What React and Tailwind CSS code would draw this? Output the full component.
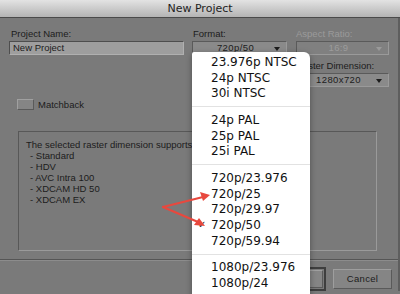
import React from "react";

const ui = { fontFamily: '"Liberation Sans", Arial, sans-serif' };
const title = { fontFamily: '"DejaVu Sans", "Liberation Sans", sans-serif' };
const menuFont = { fontFamily: '"DejaVu Sans", "Open Sans", sans-serif' };

function Label({ children, disabled, className = "" }) {
  return (
    <div
      className={`text-[9.5px] leading-[10px] h-[10px] whitespace-nowrap ${disabled ? "text-[#9a9a9a]" : "text-[#1c1c1c]"} ${className}`}
      style={ui}
    >
      {children}
    </div>
  );
}

function Select({ value, disabled, w }) {
  return (
    <div
      className={`relative h-[14px] border border-t-[#5a5a5a] border-l-[#5a5a5a] border-r-[#9a9a9a] border-b-[#9a9a9a] flex items-center justify-center ${disabled ? "bg-[#808080] text-[#9c9c9c]" : "bg-[#8a8a8a] text-[#1c1c1c]"}`}
      style={{ ...ui, width: w }}
    >
      <span className="text-[9.5px] leading-[10px] pr-[8px] tracking-[0.4px]">{value}</span>
      <span
        className={`absolute right-[6px] top-[5px] w-0 h-0 border-l-[3px] border-r-[3px] border-t-[4px] border-l-transparent border-r-transparent ${disabled ? "border-t-[#9a9a9a]" : "border-t-[#1c1c1c]"}`}
      />
    </div>
  );
}

function MenuItem({ children, checked }) {
  return (
    <div className="relative h-[15.7px] flex items-center pl-[19px] text-[12px] leading-[14px] text-[#111]" style={menuFont}>
      {checked && <span className="absolute left-[6px] top-[1px] text-[10px] text-[#222]">✓</span>}
      {children}
    </div>
  );
}

function Sep() {
  return (
    <div className="h-[11px] flex items-center">
      <div className="h-px w-full bg-[#e2e2e2]" />
    </div>
  );
}

export default function App() {
  return (
    <div className="relative w-[400px] h-[294px] overflow-hidden bg-[#7a7a7a]">
      {/* title bar */}
      <div className="h-[18px] bg-gradient-to-b from-[#e3e3e3] to-[#b4b4b4] border-b border-[#4a4a4a] flex items-center justify-center">
        <span className="text-[11px] leading-[14px] text-[#1e1e1e]" style={title}>New Project</span>
      </div>

      <div className="flex">
        <div className="flex-1">
          {/* fields */}
          <div className="flex pl-[9px] pt-[11px]">
            <div className="w-[175px]">
              <Label className="pl-[2px]">Project Name:</Label>
              <div className="mt-[2px] h-[14px] bg-[#9e9e9e] border border-t-[#4e4e4e] border-l-[#4e4e4e] border-r-[#b0b0b0] border-b-[#b0b0b0] flex items-center pl-[3px]">
                <span className="text-[9.5px] leading-[10px] text-[#1c1c1c]" style={ui}>New Project</span>
              </div>
            </div>
            <div className="ml-[8px] w-[95px]">
              <Label className="pl-[1px]">Format:</Label>
              <div className="mt-[2px]"><Select value="720p/50" w={95} /></div>
            </div>
            <div className="ml-[9px] w-[93px]">
              <Label disabled>Aspect Ratio:</Label>
              <div className="mt-[2px]"><Select value="16:9" disabled w={93} /></div>
              <Label className="mt-[6px]">Raster Dimension:</Label>
              <div className="mt-[2px]"><Select value="1280x720" w={93} /></div>
            </div>
          </div>

          {/* matchback */}
          <div className="flex items-center pl-[17px] mt-[12px] gap-[4px]">
            <div className="w-[17px] h-[11px] bg-[#858585] border border-t-[#a0a0a0] border-l-[#a0a0a0] border-r-[#5a5a5a] border-b-[#5a5a5a]" />
            <Label>Matchback</Label>
          </div>

          {/* info panel */}
          <div className="ml-[18px] mt-[21px] w-[359px] h-[120px] border border-t-[#585858] border-l-[#585858] border-r-[#9a9a9a] border-b-[#9a9a9a] pt-[7px] pl-[7px]" style={ui}>
            <div className="text-[9.5px] leading-[11px] text-[#1c1c1c]">
              <div>The selected raster dimension supports the following formats:</div>
              <div className="pl-[4px]">- Standard</div>
              <div className="pl-[4px]">- HDV</div>
              <div className="pl-[4px]">- AVC Intra 100</div>
              <div className="pl-[4px]">- XDCAM HD 50</div>
              <div className="pl-[4px]">- XDCAM EX</div>
            </div>
          </div>

          {/* separator */}
          <div className="mt-[8px] h-px bg-[#555]" />
          <div className="h-px bg-[#8c8c8c]" />

          {/* buttons */}
          <div className="flex justify-end gap-[7px] pr-[6px] pt-[6px]">
            <div className="w-[66px] h-[24px] border-2 border-[#3e3e3e] p-[1px]">
              <div className="h-full bg-[#858585] border border-t-[#a0a0a0] border-l-[#a0a0a0] border-r-[#5a5a5a] border-b-[#5a5a5a] flex items-center justify-center">
                <span className="text-[9.5px] text-[#1c1c1c]" style={ui}>OK</span>
              </div>
            </div>
            <div className="mt-[2px] w-[59px] h-[20px] bg-[#858585] border border-t-[#9e9e9e] border-l-[#9e9e9e] border-r-[#5a5a5a] border-b-[#5a5a5a] flex items-center justify-center">
              <span className="text-[9.5px] text-[#1c1c1c] tracking-[0.3px]" style={ui}>Cancel</span>
            </div>
          </div>
        </div>
        <div className="w-[2px] bg-[#5e5e5e]" />
      </div>

      {/* dropdown menu overlay */}
      <div className="absolute left-[192px] top-[52px] w-[118px] h-[250px] bg-white rounded-tr-[6px] rounded-tl-[2px] shadow-[0_2px_6px_rgba(0,0,0,0.35)] pt-[2px]">
        <MenuItem>23.976p NTSC</MenuItem>
        <MenuItem>24p NTSC</MenuItem>
        <MenuItem>30i NTSC</MenuItem>
        <Sep />
        <MenuItem>24p PAL</MenuItem>
        <MenuItem>25p PAL</MenuItem>
        <MenuItem>25i PAL</MenuItem>
        <Sep />
        <MenuItem>720p/23.976</MenuItem>
        <MenuItem>720p/25</MenuItem>
        <MenuItem>720p/29.97</MenuItem>
        <MenuItem checked>720p/50</MenuItem>
        <MenuItem>720p/59.94</MenuItem>
        <Sep />
        <MenuItem>1080p/23.976</MenuItem>
        <MenuItem>1080p/24</MenuItem>
      </div>

      {/* red arrows */}
      <svg className="absolute left-0 top-0 pointer-events-none" width="400" height="294">
        <g stroke="#e8483e" strokeWidth="2.2" strokeLinecap="round" fill="none">
          <line x1="163" y1="207" x2="203" y2="197" />
          <line x1="163" y1="207" x2="198" y2="222" />
        </g>
        <polygon points="210,195 200,192 203,201" fill="#e8483e" />
        <polygon points="205,226 194,225 199,218" fill="#e8483e" />
      </svg>
    </div>
  );
}
